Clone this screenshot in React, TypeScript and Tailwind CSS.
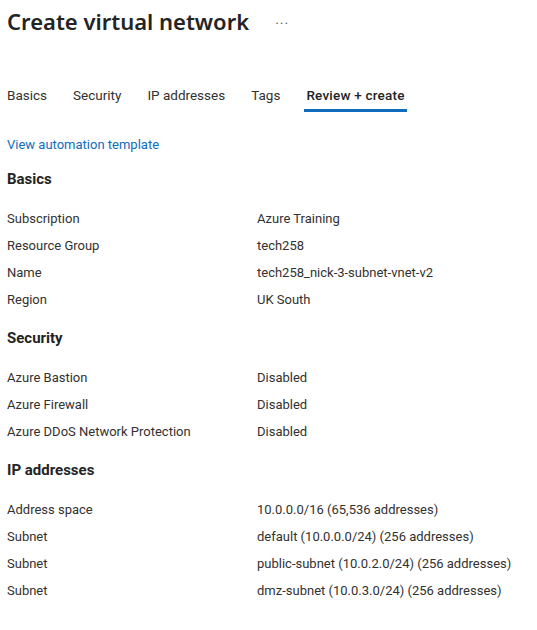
const sections = [
  {
    title: "Basics",
    rows: [
      ["Subscription", "Azure Training"],
      ["Resource Group", "tech258"],
      ["Name", "tech258_nick-3-subnet-vnet-v2"],
      ["Region", "UK South"],
    ],
  },
  {
    title: "Security",
    rows: [
      ["Azure Bastion", "Disabled"],
      ["Azure Firewall", "Disabled"],
      ["Azure DDoS Network Protection", "Disabled"],
    ],
  },
  {
    title: "IP addresses",
    rows: [
      ["Address space", "10.0.0.0/16 (65,536 addresses)"],
      ["Subnet", "default (10.0.0.0/24) (256 addresses)"],
      ["Subnet", "public-subnet (10.0.2.0/24) (256 addresses)"],
      ["Subnet", "dmz-subnet (10.0.3.0/24) (256 addresses)"],
    ],
  },
];

const tabs = ["Basics", "Security", "IP addresses", "Tags", "Review + create"];

export default function App() {
  return (
    <div className="min-h-[630px] w-[537px] bg-white pl-[7px] pt-[5px] font-['Roboto','Segoe_UI',sans-serif] text-[#323130]">
      <div className="flex items-start">
        <h1 className="font-['Noto_Sans',sans-serif] text-[22px] leading-[32px] font-semibold text-[#242424]">Create virtual network</h1>
        <span className="ml-[26px] pt-[6px] text-[14px] leading-[26px] tracking-[1px] text-[#605e5c]">···</span>
      </div>

      <div className="mt-[48px] flex gap-[26px] text-[13.5px] leading-[20px]">
        {tabs.map((t, i) =>
          i === tabs.length - 1 ? (
            <div key={t} className="-mx-[2px] border-b-[3px] border-[#0f6cbd] px-[2px] pb-[4px] font-medium tracking-[0.2px] text-[#242424]">
              {t}
            </div>
          ) : (
            <div key={t} className="pb-[7px]">
              {t}
            </div>
          )
        )}
      </div>

      <a className="mt-[24px] block text-[13px] leading-[18px] text-[#0f6cbd]">View automation template</a>

      <div className="mt-[1px]">
        {sections.map((s) => (
          <section key={s.title} className="mt-[15px]">
            <h2 className="text-[15px] leading-[20px] font-bold text-[#242424]">{s.title}</h2>
            <div className="mt-[16px]">
              {s.rows.map(([k, v], i) => (
                <div key={i} className="grid grid-cols-[250px_1fr] text-[13px] leading-[27px]">
                  <span>{k}</span>
                  <span>{v}</span>
                </div>
              ))}
            </div>
          </section>
        ))}
      </div>
    </div>
  );
}
